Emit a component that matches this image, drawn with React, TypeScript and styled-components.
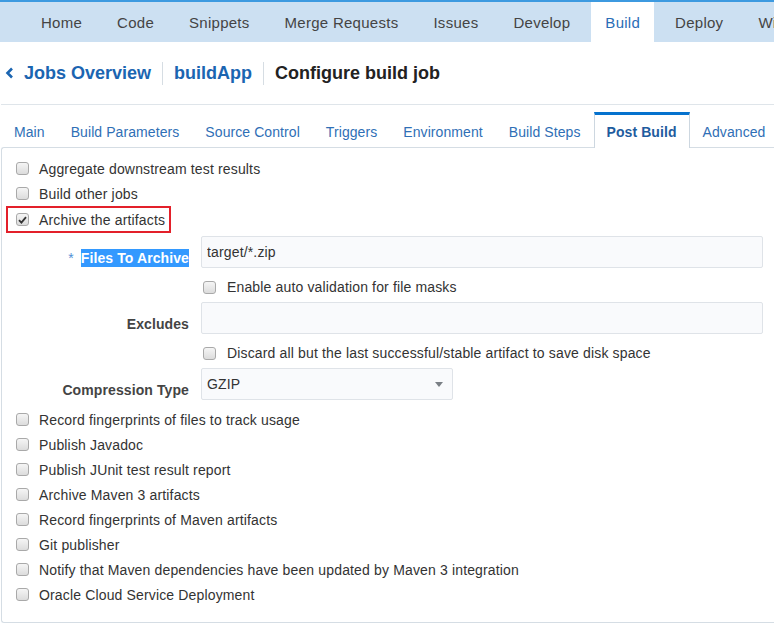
import React from "react";
import styled, { createGlobalStyle } from "styled-components";

const GlobalStyle = createGlobalStyle`
  html, body { margin: 0; padding: 0; background: #fff; }
  body {
    font-family: "Liberation Sans", Arial, sans-serif;
    color: #333;
    overflow: hidden;
  }
  * { box-sizing: border-box; }
`;

const TopNav = styled.nav`
  display: flex;
  height: 42px;
  background: #cce0f2;
  border-top: 2px solid #3d9ae0;
  padding-left: 27px;
  gap: 7px;
  overflow: hidden;
  white-space: nowrap;
`;

const NavItem = styled.div<{ $active?: boolean }>`
  display: flex;
  align-items: center;
  padding: 0 14px;
  font-size: 15px;
  letter-spacing: 0.27px;
  color: ${(p) => (p.$active ? "#2a6db6" : "#444")};
  background: ${(p) => (p.$active ? "#fff" : "transparent")};
  flex-shrink: 0;
`;

const Breadcrumbs = styled.div`
  display: flex;
  align-items: center;
  height: 63px;
  padding-left: 4px;
  border-bottom: 1px solid #dfe5ea;
  margin-left: 1px;
`;

const Crumb = styled.span<{ $current?: boolean }>`
  font-size: 18px;
  font-weight: bold;
  color: ${(p) => (p.$current ? "#222" : "#1b65b1")};
`;

const BackLink = styled.span`
  display: flex;
  align-items: center;
  gap: 10px;
`;

const Sep = styled.span`
  width: 1px;
  height: 23px;
  background: #d6dde3;
  margin: 0 11px;
`;

const Main = styled.div`
  padding: 7px 0 0 1px;
`;

const TabBar = styled.div`
  display: flex;
  align-items: flex-end;
  height: 36px;
  margin-bottom: -1px;
  position: relative;
  z-index: 1;
  white-space: nowrap;
`;

const Tab = styled.div<{ $active?: boolean }>`
  height: 36px;
  display: flex;
  align-items: center;
  padding: 0 12px;
  font-size: 14px;
  letter-spacing: 0.08px;
  border-top: 3px solid ${(p) => (p.$active ? "#0572ce" : "transparent")};
  border-left: 1px solid ${(p) => (p.$active ? "#cdd7e0" : "transparent")};
  border-right: 1px solid ${(p) => (p.$active ? "#cdd7e0" : "transparent")};
  background: ${(p) => (p.$active ? "#fff" : "transparent")};
  font-weight: ${(p) => (p.$active ? "bold" : "normal")};
  color: ${(p) => (p.$active ? "#1f5c9e" : "#2f6fb6")};
  flex-shrink: 0;
`;

const Panel = styled.div`
  border: 1px solid #d5dde4;
  border-right: none;
  border-radius: 3px 0 0 3px;
  padding: 8px 0 15px 4px;
`;

const Row = styled.label<{ $boxed?: boolean }>`
  display: flex;
  align-items: center;
  width: fit-content;
  height: ${(p) => (p.$boxed ? "27px" : "25px")};
  padding: 0 4px 0 8px;
  border: 2px solid ${(p) => (p.$boxed ? "#e3202a" : "transparent")};
  font-size: 14px;
  letter-spacing: 0.15px;
  color: #333;
`;

const Box = styled.span`
  width: 13px;
  height: 13px;
  flex-shrink: 0;
  border: 1px solid #a9a9a9;
  border-radius: 3px;
  background: linear-gradient(#f5f5f5, #dcdcdc);
  margin-right: 10px;
  display: flex;
  align-items: center;
  justify-content: center;
`;

const Form = styled.div`
  display: grid;
  grid-template-columns: 183px 1fr;
  column-gap: 12px;
  margin-top: 3px;
  padding-right: 11px;
`;

const FieldLabel = styled.div`
  text-align: right;
  padding-top: 13px;
  line-height: 18px;
  font-size: 14px;
  letter-spacing: 0.1px;
  font-weight: bold;
  color: #444;
`;

const Required = styled.span`
  color: #4f8fd6;
  font-weight: normal;
  margin-right: 7px;
`;

const Selected = styled.span`
  background: #3399ff;
  color: #fff;
  padding: 1px 0;
`;

const TextInput = styled.input`
  display: block;
  width: 100%;
  height: 32px;
  border: 1px solid #dfe3e8;
  border-radius: 2px;
  background: #f9fafc;
  padding: 0 5px;
  font-family: "Liberation Sans", Arial, sans-serif;
  font-size: 14px;
  letter-spacing: 0.15px;
  color: #333;
  outline: none;
`;

const SubCheck = styled.label`
  display: flex;
  align-items: center;
  height: 34px;
  padding: 4px 0 0 2px;
  font-size: 14px;
  letter-spacing: 0.15px;
  color: #333;
  & > span:first-child { margin-right: 11px; }
`;

const Select = styled.div`
  display: flex;
  align-items: center;
  justify-content: space-between;
  width: 252px;
  height: 32px;
  border: 1px solid #dfe3e8;
  border-radius: 2px;
  background: #f9fafc;
  padding: 0 9px 0 5px;
  font-size: 14px;
  letter-spacing: 0.15px;
  color: #333;
`;

const Caret = styled.span`
  width: 0;
  height: 0;
  border-left: 4px solid transparent;
  border-right: 4px solid transparent;
  border-top: 5px solid #7a7f85;
`;

const List = styled.div`
  margin-top: 7px;
`;

function Check({ checked }: { checked?: boolean }) {
  return (
    <Box>
      {checked && (
        <svg width="9" height="8" viewBox="0 0 9 8">
          <path d="M1 4.2 L3.4 6.6 L8 1.2" fill="none" stroke="#333" strokeWidth="1.8" />
        </svg>
      )}
    </Box>
  );
}

const navItems = ["Home", "Code", "Snippets", "Merge Requests", "Issues", "Develop", "Build", "Deploy", "Wiki"];
const tabs = ["Main", "Build Parameters", "Source Control", "Triggers", "Environment", "Build Steps", "Post Build", "Advanced"];
const lower = [
  "Record fingerprints of files to track usage",
  "Publish Javadoc",
  "Publish JUnit test result report",
  "Archive Maven 3 artifacts",
  "Record fingerprints of Maven artifacts",
  "Git publisher",
  "Notify that Maven dependencies have been updated by Maven 3 integration",
  "Oracle Cloud Service Deployment",
];

export default function App() {
  return (
    <>
      <GlobalStyle />
      <TopNav>
        {navItems.map((n) => (
          <NavItem key={n} $active={n === "Build"}>{n}</NavItem>
        ))}
      </TopNav>
      <Breadcrumbs>
        <BackLink>
          <svg width="9" height="12" viewBox="0 0 9 12">
            <path d="M7 1.5 L2.5 6 L7 10.5" fill="none" stroke="#1b65b1" strokeWidth="2.6" />
          </svg>
          <Crumb>Jobs Overview</Crumb>
        </BackLink>
        <Sep />
        <Crumb>buildApp</Crumb>
        <Sep />
        <Crumb $current>Configure build job</Crumb>
      </Breadcrumbs>
      <Main>
        <TabBar>
          {tabs.map((t) => (
            <Tab key={t} $active={t === "Post Build"}>{t}</Tab>
          ))}
        </TabBar>
        <Panel>
          <Row><Check />Aggregate downstream test results</Row>
          <Row><Check />Build other jobs</Row>
          <Row $boxed><Check checked />Archive the artifacts</Row>
          <Form>
            <FieldLabel>
              <Required>*</Required>
              <Selected>Files To Archive</Selected>
            </FieldLabel>
            <TextInput readOnly value="target/*.zip" />
            <div />
            <SubCheck><Check />Enable auto validation for file masks</SubCheck>
            <FieldLabel>Excludes</FieldLabel>
            <TextInput readOnly value="" />
            <div />
            <SubCheck><Check />Discard all but the last successful/stable artifact to save disk space</SubCheck>
            <FieldLabel>Compression Type</FieldLabel>
            <Select>
              <span>GZIP</span>
              <Caret />
            </Select>
          </Form>
          <List>
            {lower.map((l) => (
              <Row key={l}><Check />{l}</Row>
            ))}
          </List>
        </Panel>
      </Main>
    </>
  );
}
